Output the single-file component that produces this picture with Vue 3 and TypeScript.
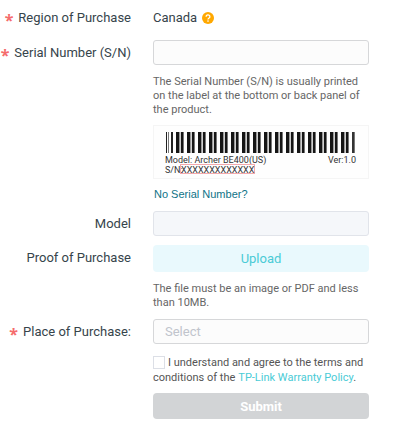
<script setup lang="ts">
import { ref } from 'vue'

const serial = ref('')
const model = ref('')
const place = ref('')
const agreed = ref(false)

interface Bar {
  x: number
  w: number
  tone: string
}

// One symbol of the printed barcode, repeated along the label.
const symbol: Bar[] = [
  { x: 0, w: 3, tone: '#161616' },
  { x: 3, w: 1, tone: '#999' },
  { x: 4, w: 1, tone: '#d0d0d0' },
  { x: 5, w: 2, tone: '#161616' },
  { x: 7, w: 1, tone: '#777' },
]
const bars: Bar[] = [
  { x: 13, w: 1, tone: '#222' },
  { x: 15, w: 1, tone: '#777' },
  { x: 18, w: 2, tone: '#222' },
]
for (let i = 0; i < 16; i++) {
  for (const b of symbol) bars.push({ ...b, x: 23 + i * 11 + b.x })
}
bars.push({ x: 199, w: 2, tone: '#333' }, { x: 201, w: 1, tone: '#777' })
</script>

<template>
  <form class="form" @submit.prevent>
    <div class="row">
      <span class="label required">Region of Purchase</span>
      <div class="field region">
        Canada
        <svg class="help-icon" viewBox="0 0 12 12" aria-hidden="true">
          <circle cx="6" cy="6" r="6" fill="#ffa800" />
          <path d="M4.1 4.7a1.9 1.8 0 1 1 2.8 1.5q-.9.5-.9 1.2" fill="none" stroke="#fff" stroke-width="1.3" />
          <circle cx="6" cy="9.100" r=".8" fill="#fff" />
        </svg>
      </div>
    </div>

    <div class="row serial">
      <label class="label required" for="serial">Serial Number (S/N)</label>
      <div class="field">
        <input id="serial" v-model="serial" class="control" type="text" />
        <p class="hint">The Serial Number (S/N) is usually printed on the label at the bottom or back panel of the product.</p>
        <svg class="sticker" viewBox="0 0 216 54" role="img">
          <rect x=".5" y=".5" width="215" height="53" fill="#fefefe" stroke="#f5f5f5" />
          <rect v-for="(b, i) in bars" :key="i" :x="b.x" y="7" :width="b.w" height="21" :fill="b.tone" />
          <text x="12" y="38">Model: Archer BE400(US)</text>
          <text x="203" y="38" text-anchor="end">Ver:1.0</text>
          <text x="12" y="48">S/N:</text>
          <rect x="27.500" y="39.500" width="74" height="9" fill="none" stroke="#f3a9ad" />
          <text x="28" y="48">XXXXXXXXXXXXX</text>
        </svg>
        <a class="no-serial" href="#">No Serial Number?</a>
      </div>
    </div>

    <div class="row model">
      <label class="label" for="model">Model</label>
      <div class="field">
        <input id="model" v-model="model" class="control" type="text" disabled />
      </div>
    </div>

    <div class="row proof">
      <label class="label" for="upload">Proof of Purchase</label>
      <div class="field">
        <button id="upload" class="upload" type="button">Upload</button>
        <p class="hint">The file must be an image or PDF and less than 10MB.</p>
      </div>
    </div>

    <div class="row place">
      <label class="label required" for="place">Place of Purchase:</label>
      <div class="field">
        <select id="place" v-model="place" class="control">
          <option value="" disabled>Select</option>
        </select>
      </div>
    </div>

    <div class="row terms">
      <div class="field">
        <p class="agreement">
          <input id="agree" v-model="agreed" class="tick" type="checkbox" />
          <label for="agree">I understand and agree to the terms and conditions of the</label>
          <a href="#">TP-Link Warranty Policy</a>.
        </p>
        <button class="submit" type="submit" :disabled="!agreed">Submit</button>
      </div>
    </div>
  </form>
</template>

<style>
body {
  background: #fff;
}
</style>

<style scoped>
.form {
  box-sizing: border-box;
  padding: 5px 51px 19px 0;
  font-family: Roboto, 'Liberation Sans', sans-serif;
  font-size: 13px;
  color: #36444b;
}
.row {
  display: grid;
  grid-template-columns: 131px minmax(0, 1fr);
  column-gap: 22px;
}
.field {
  grid-column: 2;
}
.label {
  line-height: 25px;
  text-align: right;
  white-space: nowrap;
}
.required::before {
  content: '*';
  margin-right: 5px;
  font-family: 'Noto Sans', sans-serif;
  font-size: 16px;
  font-weight: 700;
  line-height: 12px;
  vertical-align: -4px;
  color: #f56c6c;
}
.region {
  display: flex;
  align-items: center;
  gap: 5px;
  line-height: 25px;
}
.help-icon {
  width: 12px;
  height: 12px;
}
.serial {
  margin-top: 10px;
}
.control {
  display: block;
  box-sizing: border-box;
  width: 100%;
  height: 25px;
  margin: 0;
  padding: 0 11px;
  border: 1px solid #d6d7d9;
  border-radius: 3px;
  background: #fcfcfc;
  font: inherit;
  color: #36444b;
  appearance: none;
}
.control:disabled {
  border-color: #e1e4ea;
  background: #f5f7fa;
}
select.control {
  color: #c0c4cc;
}
.hint {
  margin: 10px 0 8px;
  font-size: 11px;
  line-height: 14px;
  color: #666;
}
.sticker {
  display: block;
  width: 100%;
  font-size: 9px;
  fill: #333;
}
.no-serial {
  display: block;
  margin-top: 8px;
  padding-left: 1px;
  font-family: 'Liberation Sans', sans-serif;
  font-size: 11px;
  line-height: 14px;
  color: #0f7387;
  text-decoration: none;
}
.model {
  margin-top: 10px;
}
.proof {
  margin-top: 9px;
}
.upload,
.submit {
  display: block;
  width: 100%;
  height: 27px;
  padding: 0;
  border: 0;
  border-radius: 4px;
  font: inherit;
}
.upload {
  background: #e9f9fd;
  color: #4acbd6;
}
.place {
  margin-top: 1px;
}
.terms {
  margin-top: 11px;
}
.agreement {
  margin: 0 0 8px;
  font-size: 11px;
  line-height: 15px;
  color: #555;
}
.agreement a {
  margin-left: 3px;
  color: #4acbd6;
  text-decoration: none;
}
.tick {
  box-sizing: border-box;
  width: 12px;
  height: 13px;
  margin: 0 3px 0 0;
  border: 1px solid #dcdfe6;
  background: #fff;
  vertical-align: -3px;
  appearance: none;
}
.submit {
  height: 26px;
  background: #d2d4d6;
  font-weight: 700;
  color: #fff;
}
</style>
